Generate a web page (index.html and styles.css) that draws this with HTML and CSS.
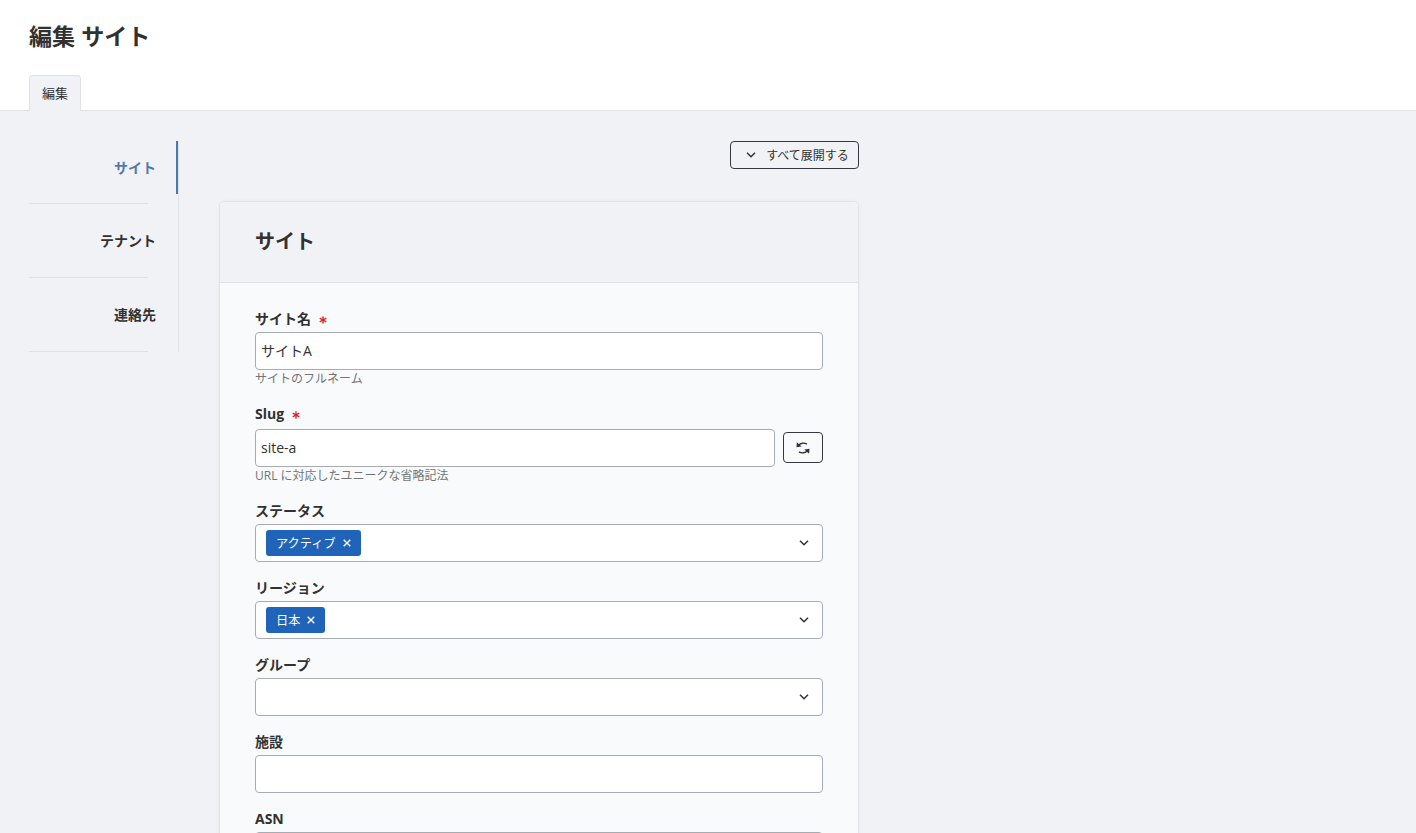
FILE: index.html
```html
<!DOCTYPE html>
<html lang="ja">

<head>
    <meta charset="UTF-8">
    <meta name="viewport" content="width=device-width, initial-scale=1.0">
    <title>編集 サイト</title>
    <link rel="stylesheet" href="styles.css">
</head>

<body>
    <svg class="sprite">
        <symbol id="chevron" viewBox="0 0 10 6">
            <path d="M1 0.8 L5 4.8 L9 0.8" fill="none" stroke="currentColor" stroke-width="1.5" />
        </symbol>
        <symbol id="close" viewBox="0 0 8 8">
            <path d="M0.7 0.7 L7.3 7.3 M7.3 0.7 L0.7 7.3" fill="none" stroke="currentColor" stroke-width="1.4" />
        </symbol>
        <symbol id="asterisk" viewBox="0 0 8 8">
            <path d="M4 0.2 V7.8 M0.7 2.1 L7.3 5.9 M7.3 2.1 L0.7 5.9" fill="none" stroke="currentColor" stroke-width="1.3" />
        </symbol>
    </svg>

    <header class="page-header">
        <h1>編集 サイト</h1>
        <div class="tabs">
            <a class="tab">編集</a>
        </div>
    </header>

    <main class="page">
        <ul class="side-nav">
            <li><a class="active">サイト</a></li>
            <li><a>テナント</a></li>
            <li><a>連絡先</a></li>
        </ul>

        <div class="content">
            <button type="button" class="btn expand">
                <svg class="chevron"><use href="#chevron" /></svg>
                <span>すべて展開する</span>
            </button>

            <section class="card">
                <h2>サイト</h2>
                <form class="fields">
                    <div class="field">
                        <label for="name">サイト名 <svg class="required"><use href="#asterisk" /></svg></label>
                        <input type="text" id="name" value="サイトA">
                        <p class="help">サイトのフルネーム</p>
                    </div>
                    <div class="field slug">
                        <label for="slug">Slug <svg class="required"><use href="#asterisk" /></svg></label>
                        <div class="input-row">
                            <input type="text" id="slug" value="site-a">
                            <button type="button" class="btn refresh" aria-label="再生成">
                                <svg viewBox="0 0 14 14">
                                    <path d="M2.8 4.3 C4.2 1.9 8.4 1.5 11 3.2 M11.2 9.7 C9.8 12.1 5.6 12.5 3 10.8" fill="none" stroke="currentColor" stroke-width="1.4" />
                                    <path d="M0.9 1.2 L0.5 6.2 L5.6 5.6 Z M13.1 12.8 L13.5 7.8 L8.4 8.4 Z" fill="currentColor" />
                                </svg>
                            </button>
                        </div>
                        <p class="help">URL に対応したユニークな省略記法</p>
                    </div>
                    <div class="field">
                        <label>ステータス</label>
                        <div class="select">
                            <span class="tag">アクティブ <svg><use href="#close" /></svg></span>
                            <svg class="chevron"><use href="#chevron" /></svg>
                        </div>
                    </div>
                    <div class="field">
                        <label>リージョン</label>
                        <div class="select">
                            <span class="tag">日本 <svg><use href="#close" /></svg></span>
                            <svg class="chevron"><use href="#chevron" /></svg>
                        </div>
                    </div>
                    <div class="field">
                        <label>グループ</label>
                        <div class="select">
                            <svg class="chevron"><use href="#chevron" /></svg>
                        </div>
                    </div>
                    <div class="field">
                        <label for="facility">施設</label>
                        <input type="text" id="facility">
                    </div>
                    <div class="field">
                        <label for="asn">ASN</label>
                        <input type="text" id="asn">
                    </div>
                </form>
            </section>
        </div>
    </main>
</body>

</html>
```
FILE: styles.css
```css
* {
    margin: 0;
    padding: 0;
    box-sizing: border-box;
}

body {
    height: 100vh;
    overflow: hidden;
    background-color: #f1f2f6;
    color: #313131;
    font-family: "Open Sans", "Noto Sans CJK JP", sans-serif;
    font-size: 14px;
}

svg {
    display: block;
    flex: none;
}

.sprite {
    display: none;
}

.page-header {
    display: flex;
    flex-direction: column;
    justify-content: space-between;
    height: 111px;
    padding: 20px 29px 0;
    background-color: #fff;
    border-bottom: 1px solid #e0e1e3;
}

.page-header h1 {
    font-size: 23.1px;
    font-weight: 600;
    line-height: 33px;
}

.tabs {
    display: flex;
    margin-bottom: -1px;
}

.tab {
    height: 36px;
    width: 52px;
    border: 1px solid #e0e1e3;
    border-bottom: none;
    border-radius: 4px 4px 0 0;
    background-color: #f1f2f6;
    font-size: 13px;
    line-height: 34px;
    text-align: center;
}

.page {
    display: flex;
    align-items: flex-start;
    gap: 40px;
    padding: 30px 29px 0;
}

.side-nav {
    width: 150px;
    border-right: 1px solid #e0e1e3;
    list-style: none;
    font-weight: 600;
}

.side-nav li {
    padding: 10px 0;
    background: linear-gradient(#e0e1e3, #e0e1e3) left bottom / 119px 1px no-repeat;
    height: 74px;
}

.side-nav li:first-child {
    height: 63px;
    padding-top: 0;
}

.side-nav a {
    display: block;
    height: 53px;
    padding-right: 20px;
    border-right: 2px solid transparent;
    line-height: 53px;
    text-align: right;
}

.side-nav a.active {
    color: #4f79ad;
    border-color: #4f79ad;
}

.content {
    display: flex;
    flex-direction: column;
    width: 640px;
}

.btn {
    display: flex;
    align-items: center;
    justify-content: center;
    border: 1px solid #35383f;
    border-radius: 4px;
    background: transparent;
    color: #313131;
    font-family: inherit;
    font-size: 12px;
}

.expand {
    align-self: flex-end;
    gap: 10px;
    width: 129px;
    height: 28px;
    margin-bottom: 32px;
    padding-left: 6px;
}

.expand span {
    padding-bottom: 1px;
}

.chevron {
    width: 10px;
    height: 6px;
}

.card {
    border: 1px solid #dfe2e6;
    border-radius: 5px;
    background-color: #f9fafc;
    box-shadow: 0 0 4px rgba(0, 0, 0, 0.03);
}

.card h2 {
    height: 81px;
    padding-left: 35px;
    border-bottom: 1px solid #dfe1e4;
    border-radius: 4px 4px 0 0;
    background-color: #f1f2f6;
    font-size: 20px;
    font-weight: 600;
    line-height: 80px;
}

.fields {
    display: flex;
    flex-direction: column;
    gap: 11px;
    padding: 21px 35px;
}

.field label {
    display: flex;
    align-items: center;
    gap: 8px;
    height: 28px;
    font-weight: 700;
}

.field.slug label {
    height: 30px;
    padding-bottom: 2px;
}

.required {
    width: 8px;
    height: 8px;
    margin-top: 3px;
    color: #dc2626;
}

.field input,
.select {
    display: flex;
    align-items: center;
    width: 100%;
    height: 38px;
    border: 1px solid #a7acb3;
    border-radius: 4px;
    background-color: #fff;
    color: #313131;
    font-family: inherit;
    font-size: 14px;
}

.field input {
    padding: 0 5px 2px;
}

.select {
    padding: 0 13px 0 10px;
}

.select .chevron {
    margin-left: auto;
}

.tag {
    display: flex;
    align-items: center;
    gap: 7px;
    height: 26px;
    padding: 0 10px;
    border-radius: 3px;
    background-color: #1f64b8;
    color: #fff;
    font-size: 12.2px;
}

.tag svg {
    width: 8px;
    height: 8px;
}

.input-row {
    display: flex;
    align-items: flex-start;
    gap: 8px;
}

.input-row input {
    flex: 1;
    width: auto;
}

.refresh {
    width: 40px;
    height: 31px;
    margin-top: 3px;
}

.refresh svg {
    width: 14px;
    height: 14px;
}

.help {
    height: 18px;
    color: #747474;
    font-size: 12px;
    line-height: 18px;
}
```
